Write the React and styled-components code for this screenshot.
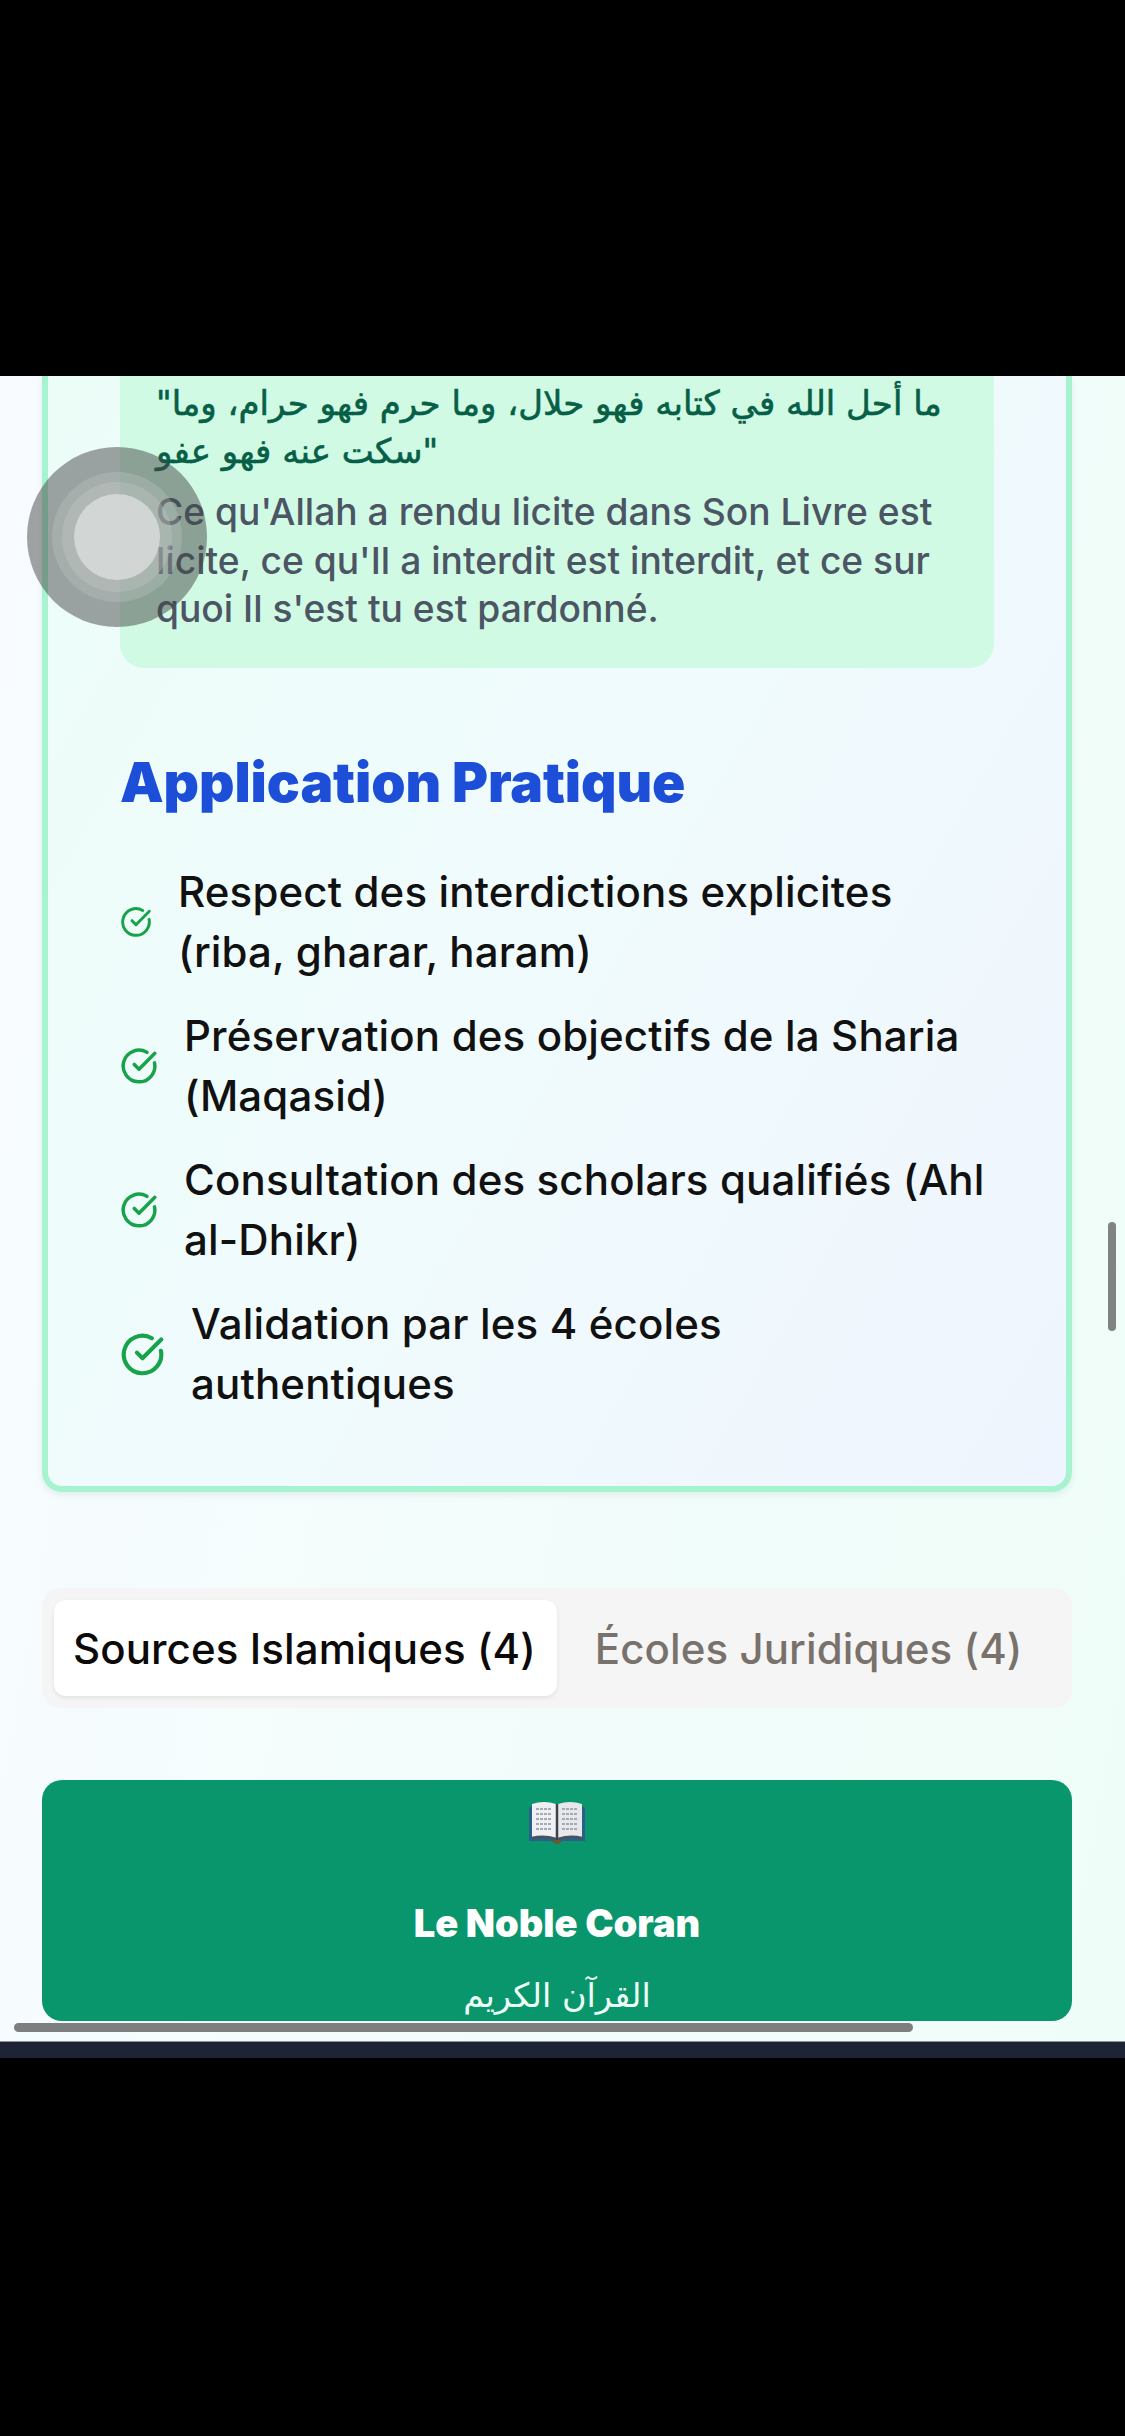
import React from "react";
import styled, { createGlobalStyle } from "styled-components";
import { CircleCheckBig } from "lucide-react";

const GlobalStyle = createGlobalStyle`
  html, body {
    margin: 0;
    padding: 0;
    background: #000;
  }
  * {
    box-sizing: border-box;
  }
`;

const Screen = styled.div`
  width: 1125px;
  height: 2436px;
  display: flex;
  flex-direction: column;
  overflow: hidden;
  background: #000;
  font-family: Inter, "Liberation Sans", "DejaVu Sans", sans-serif;
`;

const TopBlack = styled.div`
  height: 376px;
  flex: none;
  background: #000;
`;

const Viewport = styled.main`
  position: relative;
  height: 1665px;
  flex: none;
  overflow: hidden;
  padding: 0 53px 0 42px;
  background: linear-gradient(100deg, #f8fbff 0%, #f2fdfb 55%, #effdf8 100%);
`;

const BottomBar = styled.div`
  height: 17px;
  flex: none;
  background: #1e2336;
  border-top: 1px solid #8d93a0;
`;

const Card = styled.section`
  border: 6px solid #a7f3d0;
  border-top: 0;
  border-radius: 0 0 20px 20px;
  padding: 0 72px 72px;
  background: linear-gradient(120deg, #ecfdf8 0%, #f0fbfd 50%, #eff5fe 100%);
  box-shadow: 0 3px 6px rgba(80, 140, 120, 0.12);
`;

const Hadith = styled.div`
  height: 292px;
  padding: 3px 30px 0 36px;
  background: #d1fae5;
  border-radius: 0 0 24px 24px;
`;

const ArabicQuote = styled.p`
  margin: 0 0 13px;
  font-family: "DejaVu Sans", sans-serif;
  font-size: 34px;
  font-weight: 400;
  line-height: 48px;
  color: #065f46;
  -webkit-text-stroke: 0.6px #065f46;
`;

const Translation = styled.p`
  margin: 0;
  font-size: 37.2px;
  font-weight: 500;
  line-height: 48.5px;
  color: #4b5563;
`;

const Heading = styled.h2`
  margin: 81px 0 47px;
  font-size: 55px;
  font-weight: 900;
  line-height: 66px;
  letter-spacing: -0.1px;
  color: #1d4ed8;
`;

const Checklist = styled.ul`
  list-style: none;
  margin: 0;
  padding: 0;
  display: flex;
  flex-direction: column;
  gap: 24px;
`;

const CheckItem = styled.li`
  display: flex;
  align-items: center;
  gap: 26px;
  font-size: 42px;
  font-weight: 500;
  letter-spacing: 0.15px;
  line-height: 60px;
  color: #111111;
  white-space: pre-line;
`;

const CheckIcon = styled(CircleCheckBig)`
  flex: none;
  color: #16a34a;
`;

const Tabs = styled.div`
  display: flex;
  align-items: center;
  height: 120px;
  margin-top: 96px;
  padding: 0 12px;
  background: #f6f5f5;
  border-radius: 18px;
`;

const Tab = styled.div`
  height: 96px;
  display: flex;
  align-items: center;
  justify-content: center;
  padding: ${(p) => (p.$active ? "0 21px 0 19px" : "0 38px")};
  font-size: 42px;
  font-weight: 500;
  letter-spacing: 0.1px;
  white-space: nowrap;
  border-radius: 12px;
  color: ${(p) => (p.$active ? "#0c0a09" : "#78716c")};
  background: ${(p) => (p.$active ? "#fff" : "transparent")};
  box-shadow: ${(p) => (p.$active ? "0 2px 4px rgba(0, 0, 0, 0.08)" : "none")};
`;

const SourceCard = styled.article`
  height: 241px;
  margin-top: 72px;
  padding-top: 20px;
  overflow: hidden;
  display: flex;
  flex-direction: column;
  align-items: center;
  background: #0a966c;
  border-radius: 20px;
  color: #fff;
`;

const BookIcon = styled.svg`
  width: 58px;
  height: 44px;
  flex: none;
`;

const SourceTitle = styled.h3`
  margin: 55px 0 0;
  font-size: 38px;
  font-weight: 900;
  line-height: 48px;
  color: #fff;
`;

const SourceArabic = styled.div`
  margin-top: 25px;
  font-family: "DejaVu Sans", sans-serif;
  font-size: 33.5px;
  line-height: 48px;
  color: #ecfdf5;
`;

const VerticalThumb = styled.div`
  position: absolute;
  top: 846px;
  left: 1108px;
  width: 8px;
  height: 109px;
  border-radius: 4px;
  background: #7f8482;
`;

const HorizontalThumb = styled.div`
  position: absolute;
  top: 1647px;
  left: 14px;
  width: 899px;
  height: 9px;
  border-radius: 5px;
  background: #7d7f7e;
`;

const TouchButton = styled.div`
  position: absolute;
  top: 71px;
  left: 27px;
  width: 180px;
  height: 180px;
  display: flex;
  align-items: center;
  justify-content: center;
  border-radius: 50%;
  background: rgba(70, 72, 72, 0.5);
`;

const TouchRing = styled.div`
  width: ${(p) => p.$size}px;
  height: ${(p) => p.$size}px;
  flex: none;
  display: flex;
  align-items: center;
  justify-content: center;
  border-radius: 50%;
  background: ${(p) => p.$color};
`;

const checks = [
  { size: 32, text: "Respect des interdictions explicites\n(riba, gharar, haram)" },
  { size: 38, text: "Préservation des objectifs de la Sharia\n(Maqasid)" },
  { size: 38, text: "Consultation des scholars qualifiés (Ahl\nal-Dhikr)" },
  { size: 45, text: "Validation par les 4 écoles\nauthentiques" },
];

const OpenBook = () => (
  <BookIcon viewBox="0 0 58 44">
    <path d="M1 8 L4 6 V38 H25 L29 42 L33 38 H54 V6 L57 8 V41 H35 L29 44 L23 41 H1 Z" fill="#2a5f8a" />
    <path d="M4 4 Q16 0 28 4 V39 Q16 35 4 38 Z" fill="#eef0f3" />
    <path d="M30 4 Q42 0 54 4 V38 Q42 35 30 39 Z" fill="#e6e8ec" />
    <path
      d="M8 9 H24 M8 14 H24 M8 19 H24 M8 24 H24 M8 29 H24 M34 9 H50 M34 14 H50 M34 19 H50 M34 24 H50 M34 29 H50"
      stroke="#a6aab3"
      strokeWidth="2"
      strokeDasharray="3 1"
    />
    <path d="M29 4 V40" stroke="#3f424a" strokeWidth="2.5" />
    <path d="M4 38 Q16 35 28 39 M30 39 Q42 35 54 38" stroke="#4d5159" strokeWidth="2.5" fill="none" />
    <path d="M25 40 H33 L31 44 H27 Z" fill="#6b5a2a" />
  </BookIcon>
);

export default function App() {
  return (
    <>
      <GlobalStyle />
      <Screen>
        <TopBlack />
        <Viewport>
          <Card>
            <Hadith>
              <ArabicQuote dir="ltr">
                "ما أحل الله في كتابه فهو حلال، وما حرم فهو حرام، وما
                <br />
                سكت عنه فهو عفو"
              </ArabicQuote>
              <Translation>
                Ce qu'Allah a rendu licite dans Son Livre est licite, ce qu'Il a
                interdit est interdit, et ce sur quoi Il s'est tu est pardonné.
              </Translation>
            </Hadith>
            <Heading>Application Pratique</Heading>
            <Checklist>
              {checks.map((item) => (
                <CheckItem key={item.text}>
                  <CheckIcon size={item.size} strokeWidth={2.2} />
                  <span>{item.text}</span>
                </CheckItem>
              ))}
            </Checklist>
          </Card>
          <Tabs>
            <Tab $active>Sources Islamiques (4)</Tab>
            <Tab>Écoles Juridiques (4)</Tab>
          </Tabs>
          <SourceCard>
            <OpenBook />
            <SourceTitle>Le Noble Coran</SourceTitle>
            <SourceArabic>القرآن الكريم</SourceArabic>
          </SourceCard>
          <VerticalThumb />
          <HorizontalThumb />
          <TouchButton>
            <TouchRing $size={130} $color="rgba(200, 206, 203, 0.28)">
              <TouchRing $size={110} $color="rgba(200, 206, 203, 0.3)">
                <TouchRing $size={86} $color="rgba(214, 219, 216, 0.88)" />
              </TouchRing>
            </TouchRing>
          </TouchButton>
        </Viewport>
        <BottomBar />
      </Screen>
    </>
  );
}
